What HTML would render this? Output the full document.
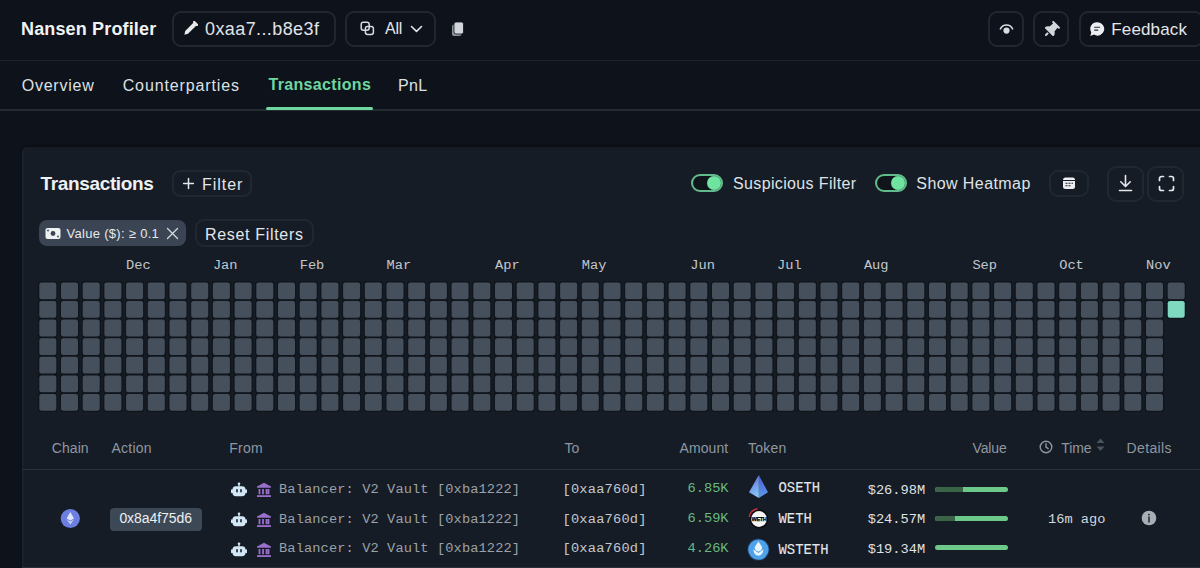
<!DOCTYPE html>
<html><head><meta charset="utf-8">
<style>
*{box-sizing:border-box;margin:0;padding:0}
html,body{width:1200px;height:568px;overflow:hidden;background:#0e121a;font-family:"Liberation Sans",sans-serif}
.a{position:absolute;white-space:nowrap}
</style></head><body>
<div class="a" style="left:21px;top:20px;font-size:18px;line-height:1;color:#f1f2f4;font-weight:bold;letter-spacing:0.15px;font-family:'Liberation Sans',sans-serif;">Nansen Profiler</div>
<div class="a" style="left:172px;top:11px;width:164px;height:36px;background:#0e121a;border:2px solid #22272f;border-radius:9px;"></div>
<svg class="a" style="left:183px;top:21px" width="15" height="15" viewBox="0 0 15 15"><path d="M10.6 1.6 L13.4 4.4 L5 12.8 L1.4 13.8 L2.2 10 Z" fill="#e8eaee"/><path d="M11.2 1 L14 3.8" stroke="#e8eaee" stroke-width="2.4" stroke-linecap="round"/></svg>
<div class="a" style="left:205px;top:20px;font-size:18px;line-height:1;color:#e0e3e7;font-weight:normal;letter-spacing:0.4px;font-family:'Liberation Sans',sans-serif;">0xaa7...b8e3f</div>
<div class="a" style="left:345px;top:11px;width:91px;height:36px;background:#0e121a;border:2px solid #22272f;border-radius:9px;"></div>
<svg class="a" style="left:360px;top:21px" width="15" height="15" viewBox="0 0 15 15"><rect x="1.2" y="1.2" width="8" height="8" rx="2.2" fill="none" stroke="#d8dbe0" stroke-width="1.5"/><rect x="5.4" y="5.4" width="8" height="8" rx="2.2" fill="none" stroke="#d8dbe0" stroke-width="1.5"/></svg>
<div class="a" style="left:385px;top:21.3px;font-size:16px;line-height:1;color:#e3e6ea;font-weight:normal;letter-spacing:-0.2px;font-family:'Liberation Sans',sans-serif;">All</div>
<svg class="a" style="left:410px;top:25px" width="13" height="8" viewBox="0 0 13 8"><path d="M1.5 1.5 L6.5 6.3 L11.5 1.5" fill="none" stroke="#e3e6ea" stroke-width="1.6" stroke-linecap="round" stroke-linejoin="round"/></svg>
<svg class="a" style="left:451px;top:21px" width="14" height="16" viewBox="0 0 14 16"><rect x="1" y="3.5" width="9.5" height="11.5" rx="2" fill="#8d939b"/><rect x="3" y="1" width="9.5" height="12" rx="2" fill="#d2d6dc" stroke="#0e121a" stroke-width="0.8"/></svg>
<div class="a" style="left:988px;top:11px;width:36px;height:36px;background:#0e121a;border:2px solid #22272f;border-radius:9px;"></div>
<svg class="a" style="left:998px;top:22px" width="17" height="13" viewBox="0 0 17 13"><path d="M2.4 6.8 A6.8 6.8 0 0 1 14.6 6.8" fill="none" stroke="#d8dbe0" stroke-width="1.6" stroke-linecap="round"/><circle cx="8.5" cy="8.6" r="3.1" fill="#d8dbe0"/></svg>
<div class="a" style="left:1033px;top:11px;width:36px;height:36px;background:#0e121a;border:2px solid #22272f;border-radius:9px;"></div>
<svg class="a" style="left:1040.5px;top:20.3px" width="20" height="20" viewBox="0 0 20 20"><g transform="rotate(45 10 10) translate(3.85 1.8) scale(0.032)"><path d="M32 32C32 14.3 46.3 0 64 0H320c17.7 0 32 14.3 32 32s-14.3 32-32 32H290.5l11.4 148.2c36.7 19.9 65.7 53.2 79.5 94.7l1 3c3.3 9.8 1.6 20.5-4.4 28.8s-15.7 13.3-26 13.3H32c-10.3 0-19.9-4.9-26-13.3s-7.7-19.1-4.4-28.8l1-3c13.8-41.5 42.8-74.8 79.5-94.7L93.5 64H64C46.3 64 32 49.7 32 32zM160 384h64v96c0 17.7-14.3 32-32 32s-32-14.3-32-32V384z" fill="#d3d7dc"/></g></svg>
<div class="a" style="left:1079px;top:11px;width:125px;height:36px;background:#0e121a;border:2px solid #22272f;border-radius:9px;"></div>
<svg class="a" style="left:1089px;top:21px" width="16" height="16" viewBox="0 0 16 16"><path d="M8.6 1.2 A6.7 6.7 0 1 1 5 13.6 L1.3 14.9 L2.3 11.4 A6.7 6.7 0 0 1 8.6 1.2 Z" fill="#eceef1"/><path d="M5.6 6.3 H10.6 M5.6 9.1 H8.8" stroke="#2a2f37" stroke-width="1.1" stroke-linecap="round"/></svg>
<div class="a" style="left:1111.3px;top:21.2px;font-size:17px;line-height:1;color:#e3e6ea;font-weight:normal;letter-spacing:0.14px;font-family:'Liberation Sans',sans-serif;">Feedback</div>
<div class="a" style="left:0px;top:60px;width:1200px;height:1px;background:#1e232a;border-radius:0px;"></div>
<div class="a" style="left:21.7px;top:77.6px;font-size:16px;line-height:1;color:#dde0e5;font-weight:normal;letter-spacing:0.77px;font-family:'Liberation Sans',sans-serif;">Overview</div>
<div class="a" style="left:122.7px;top:77.6px;font-size:16px;line-height:1;color:#dde0e5;font-weight:normal;letter-spacing:0.88px;font-family:'Liberation Sans',sans-serif;">Counterparties</div>
<div class="a" style="left:268.5px;top:77.4px;font-size:16px;line-height:1;color:#70d6a0;font-weight:bold;letter-spacing:0.33px;font-family:'Liberation Sans',sans-serif;">Transactions</div>
<div class="a" style="left:398px;top:77.6px;font-size:16px;line-height:1;color:#dde0e5;font-weight:normal;letter-spacing:0.3px;font-family:'Liberation Sans',sans-serif;">PnL</div>
<div class="a" style="left:0px;top:109px;width:1200px;height:2px;background:#262b33;border-radius:0px;"></div>
<div class="a" style="left:266px;top:107px;width:107px;height:3px;background:#70d6a0;border-radius:2px;"></div>
<div class="a" style="left:22px;top:147px;width:1200px;height:460px;background:#161c25;border-radius:6px;box-shadow:inset 1.5px 0 0 #1d232b, 0 -2px 3px rgba(0,0,0,0.22)"></div>
<div class="a" style="left:40.5px;top:173.9px;font-size:19px;line-height:1;color:#eef0f2;font-weight:bold;letter-spacing:-0.35px;font-family:'Liberation Sans',sans-serif;">Transactions</div>
<div class="a" style="left:172px;top:170px;width:80px;height:27px;background:#161c25;border:2px solid #22272f;border-radius:8px;"></div>
<svg class="a" style="left:182px;top:177.2px" width="13" height="13" viewBox="0 0 13 13"><path d="M6.5 1.6 V11.4 M1.6 6.5 H11.4" stroke="#e3e6ea" stroke-width="1.5" stroke-linecap="round"/></svg>
<div class="a" style="left:202px;top:177px;font-size:16px;line-height:1;color:#e3e6ea;font-weight:normal;letter-spacing:0.95px;font-family:'Liberation Sans',sans-serif;">Filter</div>
<div class="a" style="left:691px;top:174px;width:32px;height:18px;background:#10151c;border:2px solid #62bb8b;border-radius:9px;"></div>
<div class="a" style="left:707px;top:176px;width:14px;height:14px;border-radius:7px;background:#6fe3a0"></div>
<div class="a" style="left:733px;top:176.4px;font-size:16px;line-height:1;color:#dfe2e6;font-weight:normal;letter-spacing:0.36px;font-family:'Liberation Sans',sans-serif;">Suspicious Filter</div>
<div class="a" style="left:875px;top:174px;width:32px;height:18px;background:#10151c;border:2px solid #62bb8b;border-radius:9px;"></div>
<div class="a" style="left:891px;top:176px;width:14px;height:14px;border-radius:7px;background:#6fe3a0"></div>
<div class="a" style="left:916.3px;top:176.4px;font-size:16px;line-height:1;color:#dfe2e6;font-weight:normal;letter-spacing:0.42px;font-family:'Liberation Sans',sans-serif;">Show Heatmap</div>
<div class="a" style="left:1049px;top:170px;width:40px;height:27px;background:#161c25;border:2px solid #22272f;border-radius:9px;"></div>
<svg class="a" style="left:1062px;top:177px" width="14" height="13" viewBox="0 0 14 13"><rect x="1" y="0.5" width="12" height="11.5" rx="2.5" fill="#eceef1"/><path d="M1 3.5 H13" stroke="#161c25" stroke-width="1"/><path d="M3.5 6.2 H5.5 M6.5 6.2 H8.5 M9.5 6.2 H11 M3.5 8.8 H5.5 M6.5 8.8 H8.5" stroke="#161c25" stroke-width="1.1"/></svg>
<div class="a" style="left:1107px;top:166px;width:37px;height:36px;background:#161c25;border:2px solid #22272f;border-radius:9px;"></div>
<svg class="a" style="left:1118px;top:174px" width="15" height="18" viewBox="0 0 15 18"><path d="M7.5 1.5 V12 M2.8 7.8 L7.5 12.5 L12.2 7.8" fill="none" stroke="#e6e8ec" stroke-width="1.6" stroke-linecap="round" stroke-linejoin="round"/><path d="M1.5 16.5 H13.5" stroke="#e6e8ec" stroke-width="1.6" stroke-linecap="round"/></svg>
<div class="a" style="left:1147px;top:166px;width:37px;height:36px;background:#161c25;border:2px solid #22272f;border-radius:9px;"></div>
<svg class="a" style="left:1158px;top:175px" width="17" height="17" viewBox="0 0 17 17"><path d="M1.5 5.5 V3.5 A2 2 0 0 1 3.5 1.5 H5.5 M11.5 1.5 H13.5 A2 2 0 0 1 15.5 3.5 V5.5 M15.5 11.5 V13.5 A2 2 0 0 1 13.5 15.5 H11.5 M5.5 15.5 H3.5 A2 2 0 0 1 1.5 13.5 V11.5" fill="none" stroke="#e6e8ec" stroke-width="1.7" stroke-linecap="round"/></svg>
<div class="a" style="left:39px;top:220px;width:147px;height:26px;background:#3a4452;border-radius:8px;"></div>
<svg class="a" style="left:45px;top:227px" width="16" height="13" viewBox="0 0 16 13"><rect x="0.5" y="1" width="15" height="11" rx="2" fill="#eef0f2"/><circle cx="8" cy="6.5" r="2.4" fill="#3a4452"/><circle cx="3" cy="3.5" r="0.9" fill="#3a4452"/><circle cx="13" cy="9.5" r="0.9" fill="#3a4452"/></svg>
<div class="a" style="left:66.5px;top:226.8px;font-size:13px;line-height:1;color:#e6e8ec;font-weight:normal;letter-spacing:0.3px;font-family:'Liberation Sans',sans-serif;">Value ($): &#8805; 0.1</div>
<svg class="a" style="left:166px;top:227px" width="13" height="13" viewBox="0 0 13 13"><path d="M1.5 1.5 L11.5 11.5 M11.5 1.5 L1.5 11.5" stroke="#d5d9de" stroke-width="1.3" stroke-linecap="round"/></svg>
<div class="a" style="left:195px;top:219px;width:119px;height:28px;background:#161c25;border:2px solid #22272f;border-radius:9px;"></div>
<div class="a" style="left:205px;top:226.7px;font-size:16px;line-height:1;color:#e3e6ea;font-weight:normal;letter-spacing:0.68px;font-family:'Liberation Sans',sans-serif;">Reset Filters</div>
<div class="a" style="left:126.1px;top:258.6px;font-size:13.7px;line-height:1;color:#c2c7cd;font-weight:normal;letter-spacing:0px;font-family:'Liberation Mono',monospace;">Dec</div>
<div class="a" style="left:212.9px;top:258.6px;font-size:13.7px;line-height:1;color:#c2c7cd;font-weight:normal;letter-spacing:0px;font-family:'Liberation Mono',monospace;">Jan</div>
<div class="a" style="left:299.7px;top:258.6px;font-size:13.7px;line-height:1;color:#c2c7cd;font-weight:normal;letter-spacing:0px;font-family:'Liberation Mono',monospace;">Feb</div>
<div class="a" style="left:386.5px;top:258.6px;font-size:13.7px;line-height:1;color:#c2c7cd;font-weight:normal;letter-spacing:0px;font-family:'Liberation Mono',monospace;">Mar</div>
<div class="a" style="left:495.0px;top:258.6px;font-size:13.7px;line-height:1;color:#c2c7cd;font-weight:normal;letter-spacing:0px;font-family:'Liberation Mono',monospace;">Apr</div>
<div class="a" style="left:581.8px;top:258.6px;font-size:13.7px;line-height:1;color:#c2c7cd;font-weight:normal;letter-spacing:0px;font-family:'Liberation Mono',monospace;">May</div>
<div class="a" style="left:690.3px;top:258.6px;font-size:13.7px;line-height:1;color:#c2c7cd;font-weight:normal;letter-spacing:0px;font-family:'Liberation Mono',monospace;">Jun</div>
<div class="a" style="left:777.1px;top:258.6px;font-size:13.7px;line-height:1;color:#c2c7cd;font-weight:normal;letter-spacing:0px;font-family:'Liberation Mono',monospace;">Jul</div>
<div class="a" style="left:863.9px;top:258.6px;font-size:13.7px;line-height:1;color:#c2c7cd;font-weight:normal;letter-spacing:0px;font-family:'Liberation Mono',monospace;">Aug</div>
<div class="a" style="left:972.4px;top:258.6px;font-size:13.7px;line-height:1;color:#c2c7cd;font-weight:normal;letter-spacing:0px;font-family:'Liberation Mono',monospace;">Sep</div>
<div class="a" style="left:1059.2px;top:258.6px;font-size:13.7px;line-height:1;color:#c2c7cd;font-weight:normal;letter-spacing:0px;font-family:'Liberation Mono',monospace;">Oct</div>
<div class="a" style="left:1146.0px;top:258.6px;font-size:13.7px;line-height:1;color:#c2c7cd;font-weight:normal;letter-spacing:0px;font-family:'Liberation Mono',monospace;">Nov</div>
<svg class="a" style="left:0;top:0" width="1200" height="568"><rect x="39.30" y="282.40" width="17" height="16.8" rx="2.2" fill="#46505c" stroke="#10151c" stroke-width="2.6" paint-order="stroke"/><rect x="39.30" y="301.00" width="17" height="16.8" rx="2.2" fill="#46505c" stroke="#10151c" stroke-width="2.6" paint-order="stroke"/><rect x="39.30" y="319.60" width="17" height="16.8" rx="2.2" fill="#46505c" stroke="#10151c" stroke-width="2.6" paint-order="stroke"/><rect x="39.30" y="338.20" width="17" height="16.8" rx="2.2" fill="#46505c" stroke="#10151c" stroke-width="2.6" paint-order="stroke"/><rect x="39.30" y="356.80" width="17" height="16.8" rx="2.2" fill="#46505c" stroke="#10151c" stroke-width="2.6" paint-order="stroke"/><rect x="39.30" y="375.40" width="17" height="16.8" rx="2.2" fill="#46505c" stroke="#10151c" stroke-width="2.6" paint-order="stroke"/><rect x="39.30" y="394.00" width="17" height="16.8" rx="2.2" fill="#46505c" stroke="#10151c" stroke-width="2.6" paint-order="stroke"/><rect x="61.00" y="282.40" width="17" height="16.8" rx="2.2" fill="#46505c" stroke="#10151c" stroke-width="2.6" paint-order="stroke"/><rect x="61.00" y="301.00" width="17" height="16.8" rx="2.2" fill="#46505c" stroke="#10151c" stroke-width="2.6" paint-order="stroke"/><rect x="61.00" y="319.60" width="17" height="16.8" rx="2.2" fill="#46505c" stroke="#10151c" stroke-width="2.6" paint-order="stroke"/><rect x="61.00" y="338.20" width="17" height="16.8" rx="2.2" fill="#46505c" stroke="#10151c" stroke-width="2.6" paint-order="stroke"/><rect x="61.00" y="356.80" width="17" height="16.8" rx="2.2" fill="#46505c" stroke="#10151c" stroke-width="2.6" paint-order="stroke"/><rect x="61.00" y="375.40" width="17" height="16.8" rx="2.2" fill="#46505c" stroke="#10151c" stroke-width="2.6" paint-order="stroke"/><rect x="61.00" y="394.00" width="17" height="16.8" rx="2.2" fill="#46505c" stroke="#10151c" stroke-width="2.6" paint-order="stroke"/><rect x="82.70" y="282.40" width="17" height="16.8" rx="2.2" fill="#46505c" stroke="#10151c" stroke-width="2.6" paint-order="stroke"/><rect x="82.70" y="301.00" width="17" height="16.8" rx="2.2" fill="#46505c" stroke="#10151c" stroke-width="2.6" paint-order="stroke"/><rect x="82.70" y="319.60" width="17" height="16.8" rx="2.2" fill="#46505c" stroke="#10151c" stroke-width="2.6" paint-order="stroke"/><rect x="82.70" y="338.20" width="17" height="16.8" rx="2.2" fill="#46505c" stroke="#10151c" stroke-width="2.6" paint-order="stroke"/><rect x="82.70" y="356.80" width="17" height="16.8" rx="2.2" fill="#46505c" stroke="#10151c" stroke-width="2.6" paint-order="stroke"/><rect x="82.70" y="375.40" width="17" height="16.8" rx="2.2" fill="#46505c" stroke="#10151c" stroke-width="2.6" paint-order="stroke"/><rect x="82.70" y="394.00" width="17" height="16.8" rx="2.2" fill="#46505c" stroke="#10151c" stroke-width="2.6" paint-order="stroke"/><rect x="104.40" y="282.40" width="17" height="16.8" rx="2.2" fill="#46505c" stroke="#10151c" stroke-width="2.6" paint-order="stroke"/><rect x="104.40" y="301.00" width="17" height="16.8" rx="2.2" fill="#46505c" stroke="#10151c" stroke-width="2.6" paint-order="stroke"/><rect x="104.40" y="319.60" width="17" height="16.8" rx="2.2" fill="#46505c" stroke="#10151c" stroke-width="2.6" paint-order="stroke"/><rect x="104.40" y="338.20" width="17" height="16.8" rx="2.2" fill="#46505c" stroke="#10151c" stroke-width="2.6" paint-order="stroke"/><rect x="104.40" y="356.80" width="17" height="16.8" rx="2.2" fill="#46505c" stroke="#10151c" stroke-width="2.6" paint-order="stroke"/><rect x="104.40" y="375.40" width="17" height="16.8" rx="2.2" fill="#46505c" stroke="#10151c" stroke-width="2.6" paint-order="stroke"/><rect x="104.40" y="394.00" width="17" height="16.8" rx="2.2" fill="#46505c" stroke="#10151c" stroke-width="2.6" paint-order="stroke"/><rect x="126.10" y="282.40" width="17" height="16.8" rx="2.2" fill="#46505c" stroke="#10151c" stroke-width="2.6" paint-order="stroke"/><rect x="126.10" y="301.00" width="17" height="16.8" rx="2.2" fill="#46505c" stroke="#10151c" stroke-width="2.6" paint-order="stroke"/><rect x="126.10" y="319.60" width="17" height="16.8" rx="2.2" fill="#46505c" stroke="#10151c" stroke-width="2.6" paint-order="stroke"/><rect x="126.10" y="338.20" width="17" height="16.8" rx="2.2" fill="#46505c" stroke="#10151c" stroke-width="2.6" paint-order="stroke"/><rect x="126.10" y="356.80" width="17" height="16.8" rx="2.2" fill="#46505c" stroke="#10151c" stroke-width="2.6" paint-order="stroke"/><rect x="126.10" y="375.40" width="17" height="16.8" rx="2.2" fill="#46505c" stroke="#10151c" stroke-width="2.6" paint-order="stroke"/><rect x="126.10" y="394.00" width="17" height="16.8" rx="2.2" fill="#46505c" stroke="#10151c" stroke-width="2.6" paint-order="stroke"/><rect x="147.80" y="282.40" width="17" height="16.8" rx="2.2" fill="#46505c" stroke="#10151c" stroke-width="2.6" paint-order="stroke"/><rect x="147.80" y="301.00" width="17" height="16.8" rx="2.2" fill="#46505c" stroke="#10151c" stroke-width="2.6" paint-order="stroke"/><rect x="147.80" y="319.60" width="17" height="16.8" rx="2.2" fill="#46505c" stroke="#10151c" stroke-width="2.6" paint-order="stroke"/><rect x="147.80" y="338.20" width="17" height="16.8" rx="2.2" fill="#46505c" stroke="#10151c" stroke-width="2.6" paint-order="stroke"/><rect x="147.80" y="356.80" width="17" height="16.8" rx="2.2" fill="#46505c" stroke="#10151c" stroke-width="2.6" paint-order="stroke"/><rect x="147.80" y="375.40" width="17" height="16.8" rx="2.2" fill="#46505c" stroke="#10151c" stroke-width="2.6" paint-order="stroke"/><rect x="147.80" y="394.00" width="17" height="16.8" rx="2.2" fill="#46505c" stroke="#10151c" stroke-width="2.6" paint-order="stroke"/><rect x="169.50" y="282.40" width="17" height="16.8" rx="2.2" fill="#46505c" stroke="#10151c" stroke-width="2.6" paint-order="stroke"/><rect x="169.50" y="301.00" width="17" height="16.8" rx="2.2" fill="#46505c" stroke="#10151c" stroke-width="2.6" paint-order="stroke"/><rect x="169.50" y="319.60" width="17" height="16.8" rx="2.2" fill="#46505c" stroke="#10151c" stroke-width="2.6" paint-order="stroke"/><rect x="169.50" y="338.20" width="17" height="16.8" rx="2.2" fill="#46505c" stroke="#10151c" stroke-width="2.6" paint-order="stroke"/><rect x="169.50" y="356.80" width="17" height="16.8" rx="2.2" fill="#46505c" stroke="#10151c" stroke-width="2.6" paint-order="stroke"/><rect x="169.50" y="375.40" width="17" height="16.8" rx="2.2" fill="#46505c" stroke="#10151c" stroke-width="2.6" paint-order="stroke"/><rect x="169.50" y="394.00" width="17" height="16.8" rx="2.2" fill="#46505c" stroke="#10151c" stroke-width="2.6" paint-order="stroke"/><rect x="191.20" y="282.40" width="17" height="16.8" rx="2.2" fill="#46505c" stroke="#10151c" stroke-width="2.6" paint-order="stroke"/><rect x="191.20" y="301.00" width="17" height="16.8" rx="2.2" fill="#46505c" stroke="#10151c" stroke-width="2.6" paint-order="stroke"/><rect x="191.20" y="319.60" width="17" height="16.8" rx="2.2" fill="#46505c" stroke="#10151c" stroke-width="2.6" paint-order="stroke"/><rect x="191.20" y="338.20" width="17" height="16.8" rx="2.2" fill="#46505c" stroke="#10151c" stroke-width="2.6" paint-order="stroke"/><rect x="191.20" y="356.80" width="17" height="16.8" rx="2.2" fill="#46505c" stroke="#10151c" stroke-width="2.6" paint-order="stroke"/><rect x="191.20" y="375.40" width="17" height="16.8" rx="2.2" fill="#46505c" stroke="#10151c" stroke-width="2.6" paint-order="stroke"/><rect x="191.20" y="394.00" width="17" height="16.8" rx="2.2" fill="#46505c" stroke="#10151c" stroke-width="2.6" paint-order="stroke"/><rect x="212.90" y="282.40" width="17" height="16.8" rx="2.2" fill="#46505c" stroke="#10151c" stroke-width="2.6" paint-order="stroke"/><rect x="212.90" y="301.00" width="17" height="16.8" rx="2.2" fill="#46505c" stroke="#10151c" stroke-width="2.6" paint-order="stroke"/><rect x="212.90" y="319.60" width="17" height="16.8" rx="2.2" fill="#46505c" stroke="#10151c" stroke-width="2.6" paint-order="stroke"/><rect x="212.90" y="338.20" width="17" height="16.8" rx="2.2" fill="#46505c" stroke="#10151c" stroke-width="2.6" paint-order="stroke"/><rect x="212.90" y="356.80" width="17" height="16.8" rx="2.2" fill="#46505c" stroke="#10151c" stroke-width="2.6" paint-order="stroke"/><rect x="212.90" y="375.40" width="17" height="16.8" rx="2.2" fill="#46505c" stroke="#10151c" stroke-width="2.6" paint-order="stroke"/><rect x="212.90" y="394.00" width="17" height="16.8" rx="2.2" fill="#46505c" stroke="#10151c" stroke-width="2.6" paint-order="stroke"/><rect x="234.60" y="282.40" width="17" height="16.8" rx="2.2" fill="#46505c" stroke="#10151c" stroke-width="2.6" paint-order="stroke"/><rect x="234.60" y="301.00" width="17" height="16.8" rx="2.2" fill="#46505c" stroke="#10151c" stroke-width="2.6" paint-order="stroke"/><rect x="234.60" y="319.60" width="17" height="16.8" rx="2.2" fill="#46505c" stroke="#10151c" stroke-width="2.6" paint-order="stroke"/><rect x="234.60" y="338.20" width="17" height="16.8" rx="2.2" fill="#46505c" stroke="#10151c" stroke-width="2.6" paint-order="stroke"/><rect x="234.60" y="356.80" width="17" height="16.8" rx="2.2" fill="#46505c" stroke="#10151c" stroke-width="2.6" paint-order="stroke"/><rect x="234.60" y="375.40" width="17" height="16.8" rx="2.2" fill="#46505c" stroke="#10151c" stroke-width="2.6" paint-order="stroke"/><rect x="234.60" y="394.00" width="17" height="16.8" rx="2.2" fill="#46505c" stroke="#10151c" stroke-width="2.6" paint-order="stroke"/><rect x="256.30" y="282.40" width="17" height="16.8" rx="2.2" fill="#46505c" stroke="#10151c" stroke-width="2.6" paint-order="stroke"/><rect x="256.30" y="301.00" width="17" height="16.8" rx="2.2" fill="#46505c" stroke="#10151c" stroke-width="2.6" paint-order="stroke"/><rect x="256.30" y="319.60" width="17" height="16.8" rx="2.2" fill="#46505c" stroke="#10151c" stroke-width="2.6" paint-order="stroke"/><rect x="256.30" y="338.20" width="17" height="16.8" rx="2.2" fill="#46505c" stroke="#10151c" stroke-width="2.6" paint-order="stroke"/><rect x="256.30" y="356.80" width="17" height="16.8" rx="2.2" fill="#46505c" stroke="#10151c" stroke-width="2.6" paint-order="stroke"/><rect x="256.30" y="375.40" width="17" height="16.8" rx="2.2" fill="#46505c" stroke="#10151c" stroke-width="2.6" paint-order="stroke"/><rect x="256.30" y="394.00" width="17" height="16.8" rx="2.2" fill="#46505c" stroke="#10151c" stroke-width="2.6" paint-order="stroke"/><rect x="278.00" y="282.40" width="17" height="16.8" rx="2.2" fill="#46505c" stroke="#10151c" stroke-width="2.6" paint-order="stroke"/><rect x="278.00" y="301.00" width="17" height="16.8" rx="2.2" fill="#46505c" stroke="#10151c" stroke-width="2.6" paint-order="stroke"/><rect x="278.00" y="319.60" width="17" height="16.8" rx="2.2" fill="#46505c" stroke="#10151c" stroke-width="2.6" paint-order="stroke"/><rect x="278.00" y="338.20" width="17" height="16.8" rx="2.2" fill="#46505c" stroke="#10151c" stroke-width="2.6" paint-order="stroke"/><rect x="278.00" y="356.80" width="17" height="16.8" rx="2.2" fill="#46505c" stroke="#10151c" stroke-width="2.6" paint-order="stroke"/><rect x="278.00" y="375.40" width="17" height="16.8" rx="2.2" fill="#46505c" stroke="#10151c" stroke-width="2.6" paint-order="stroke"/><rect x="278.00" y="394.00" width="17" height="16.8" rx="2.2" fill="#46505c" stroke="#10151c" stroke-width="2.6" paint-order="stroke"/><rect x="299.70" y="282.40" width="17" height="16.8" rx="2.2" fill="#46505c" stroke="#10151c" stroke-width="2.6" paint-order="stroke"/><rect x="299.70" y="301.00" width="17" height="16.8" rx="2.2" fill="#46505c" stroke="#10151c" stroke-width="2.6" paint-order="stroke"/><rect x="299.70" y="319.60" width="17" height="16.8" rx="2.2" fill="#46505c" stroke="#10151c" stroke-width="2.6" paint-order="stroke"/><rect x="299.70" y="338.20" width="17" height="16.8" rx="2.2" fill="#46505c" stroke="#10151c" stroke-width="2.6" paint-order="stroke"/><rect x="299.70" y="356.80" width="17" height="16.8" rx="2.2" fill="#46505c" stroke="#10151c" stroke-width="2.6" paint-order="stroke"/><rect x="299.70" y="375.40" width="17" height="16.8" rx="2.2" fill="#46505c" stroke="#10151c" stroke-width="2.6" paint-order="stroke"/><rect x="299.70" y="394.00" width="17" height="16.8" rx="2.2" fill="#46505c" stroke="#10151c" stroke-width="2.6" paint-order="stroke"/><rect x="321.40" y="282.40" width="17" height="16.8" rx="2.2" fill="#46505c" stroke="#10151c" stroke-width="2.6" paint-order="stroke"/><rect x="321.40" y="301.00" width="17" height="16.8" rx="2.2" fill="#46505c" stroke="#10151c" stroke-width="2.6" paint-order="stroke"/><rect x="321.40" y="319.60" width="17" height="16.8" rx="2.2" fill="#46505c" stroke="#10151c" stroke-width="2.6" paint-order="stroke"/><rect x="321.40" y="338.20" width="17" height="16.8" rx="2.2" fill="#46505c" stroke="#10151c" stroke-width="2.6" paint-order="stroke"/><rect x="321.40" y="356.80" width="17" height="16.8" rx="2.2" fill="#46505c" stroke="#10151c" stroke-width="2.6" paint-order="stroke"/><rect x="321.40" y="375.40" width="17" height="16.8" rx="2.2" fill="#46505c" stroke="#10151c" stroke-width="2.6" paint-order="stroke"/><rect x="321.40" y="394.00" width="17" height="16.8" rx="2.2" fill="#46505c" stroke="#10151c" stroke-width="2.6" paint-order="stroke"/><rect x="343.10" y="282.40" width="17" height="16.8" rx="2.2" fill="#46505c" stroke="#10151c" stroke-width="2.6" paint-order="stroke"/><rect x="343.10" y="301.00" width="17" height="16.8" rx="2.2" fill="#46505c" stroke="#10151c" stroke-width="2.6" paint-order="stroke"/><rect x="343.10" y="319.60" width="17" height="16.8" rx="2.2" fill="#46505c" stroke="#10151c" stroke-width="2.6" paint-order="stroke"/><rect x="343.10" y="338.20" width="17" height="16.8" rx="2.2" fill="#46505c" stroke="#10151c" stroke-width="2.6" paint-order="stroke"/><rect x="343.10" y="356.80" width="17" height="16.8" rx="2.2" fill="#46505c" stroke="#10151c" stroke-width="2.6" paint-order="stroke"/><rect x="343.10" y="375.40" width="17" height="16.8" rx="2.2" fill="#46505c" stroke="#10151c" stroke-width="2.6" paint-order="stroke"/><rect x="343.10" y="394.00" width="17" height="16.8" rx="2.2" fill="#46505c" stroke="#10151c" stroke-width="2.6" paint-order="stroke"/><rect x="364.80" y="282.40" width="17" height="16.8" rx="2.2" fill="#46505c" stroke="#10151c" stroke-width="2.6" paint-order="stroke"/><rect x="364.80" y="301.00" width="17" height="16.8" rx="2.2" fill="#46505c" stroke="#10151c" stroke-width="2.6" paint-order="stroke"/><rect x="364.80" y="319.60" width="17" height="16.8" rx="2.2" fill="#46505c" stroke="#10151c" stroke-width="2.6" paint-order="stroke"/><rect x="364.80" y="338.20" width="17" height="16.8" rx="2.2" fill="#46505c" stroke="#10151c" stroke-width="2.6" paint-order="stroke"/><rect x="364.80" y="356.80" width="17" height="16.8" rx="2.2" fill="#46505c" stroke="#10151c" stroke-width="2.6" paint-order="stroke"/><rect x="364.80" y="375.40" width="17" height="16.8" rx="2.2" fill="#46505c" stroke="#10151c" stroke-width="2.6" paint-order="stroke"/><rect x="364.80" y="394.00" width="17" height="16.8" rx="2.2" fill="#46505c" stroke="#10151c" stroke-width="2.6" paint-order="stroke"/><rect x="386.50" y="282.40" width="17" height="16.8" rx="2.2" fill="#46505c" stroke="#10151c" stroke-width="2.6" paint-order="stroke"/><rect x="386.50" y="301.00" width="17" height="16.8" rx="2.2" fill="#46505c" stroke="#10151c" stroke-width="2.6" paint-order="stroke"/><rect x="386.50" y="319.60" width="17" height="16.8" rx="2.2" fill="#46505c" stroke="#10151c" stroke-width="2.6" paint-order="stroke"/><rect x="386.50" y="338.20" width="17" height="16.8" rx="2.2" fill="#46505c" stroke="#10151c" stroke-width="2.6" paint-order="stroke"/><rect x="386.50" y="356.80" width="17" height="16.8" rx="2.2" fill="#46505c" stroke="#10151c" stroke-width="2.6" paint-order="stroke"/><rect x="386.50" y="375.40" width="17" height="16.8" rx="2.2" fill="#46505c" stroke="#10151c" stroke-width="2.6" paint-order="stroke"/><rect x="386.50" y="394.00" width="17" height="16.8" rx="2.2" fill="#46505c" stroke="#10151c" stroke-width="2.6" paint-order="stroke"/><rect x="408.20" y="282.40" width="17" height="16.8" rx="2.2" fill="#46505c" stroke="#10151c" stroke-width="2.6" paint-order="stroke"/><rect x="408.20" y="301.00" width="17" height="16.8" rx="2.2" fill="#46505c" stroke="#10151c" stroke-width="2.6" paint-order="stroke"/><rect x="408.20" y="319.60" width="17" height="16.8" rx="2.2" fill="#46505c" stroke="#10151c" stroke-width="2.6" paint-order="stroke"/><rect x="408.20" y="338.20" width="17" height="16.8" rx="2.2" fill="#46505c" stroke="#10151c" stroke-width="2.6" paint-order="stroke"/><rect x="408.20" y="356.80" width="17" height="16.8" rx="2.2" fill="#46505c" stroke="#10151c" stroke-width="2.6" paint-order="stroke"/><rect x="408.20" y="375.40" width="17" height="16.8" rx="2.2" fill="#46505c" stroke="#10151c" stroke-width="2.6" paint-order="stroke"/><rect x="408.20" y="394.00" width="17" height="16.8" rx="2.2" fill="#46505c" stroke="#10151c" stroke-width="2.6" paint-order="stroke"/><rect x="429.90" y="282.40" width="17" height="16.8" rx="2.2" fill="#46505c" stroke="#10151c" stroke-width="2.6" paint-order="stroke"/><rect x="429.90" y="301.00" width="17" height="16.8" rx="2.2" fill="#46505c" stroke="#10151c" stroke-width="2.6" paint-order="stroke"/><rect x="429.90" y="319.60" width="17" height="16.8" rx="2.2" fill="#46505c" stroke="#10151c" stroke-width="2.6" paint-order="stroke"/><rect x="429.90" y="338.20" width="17" height="16.8" rx="2.2" fill="#46505c" stroke="#10151c" stroke-width="2.6" paint-order="stroke"/><rect x="429.90" y="356.80" width="17" height="16.8" rx="2.2" fill="#46505c" stroke="#10151c" stroke-width="2.6" paint-order="stroke"/><rect x="429.90" y="375.40" width="17" height="16.8" rx="2.2" fill="#46505c" stroke="#10151c" stroke-width="2.6" paint-order="stroke"/><rect x="429.90" y="394.00" width="17" height="16.8" rx="2.2" fill="#46505c" stroke="#10151c" stroke-width="2.6" paint-order="stroke"/><rect x="451.60" y="282.40" width="17" height="16.8" rx="2.2" fill="#46505c" stroke="#10151c" stroke-width="2.6" paint-order="stroke"/><rect x="451.60" y="301.00" width="17" height="16.8" rx="2.2" fill="#46505c" stroke="#10151c" stroke-width="2.6" paint-order="stroke"/><rect x="451.60" y="319.60" width="17" height="16.8" rx="2.2" fill="#46505c" stroke="#10151c" stroke-width="2.6" paint-order="stroke"/><rect x="451.60" y="338.20" width="17" height="16.8" rx="2.2" fill="#46505c" stroke="#10151c" stroke-width="2.6" paint-order="stroke"/><rect x="451.60" y="356.80" width="17" height="16.8" rx="2.2" fill="#46505c" stroke="#10151c" stroke-width="2.6" paint-order="stroke"/><rect x="451.60" y="375.40" width="17" height="16.8" rx="2.2" fill="#46505c" stroke="#10151c" stroke-width="2.6" paint-order="stroke"/><rect x="451.60" y="394.00" width="17" height="16.8" rx="2.2" fill="#46505c" stroke="#10151c" stroke-width="2.6" paint-order="stroke"/><rect x="473.30" y="282.40" width="17" height="16.8" rx="2.2" fill="#46505c" stroke="#10151c" stroke-width="2.6" paint-order="stroke"/><rect x="473.30" y="301.00" width="17" height="16.8" rx="2.2" fill="#46505c" stroke="#10151c" stroke-width="2.6" paint-order="stroke"/><rect x="473.30" y="319.60" width="17" height="16.8" rx="2.2" fill="#46505c" stroke="#10151c" stroke-width="2.6" paint-order="stroke"/><rect x="473.30" y="338.20" width="17" height="16.8" rx="2.2" fill="#46505c" stroke="#10151c" stroke-width="2.6" paint-order="stroke"/><rect x="473.30" y="356.80" width="17" height="16.8" rx="2.2" fill="#46505c" stroke="#10151c" stroke-width="2.6" paint-order="stroke"/><rect x="473.30" y="375.40" width="17" height="16.8" rx="2.2" fill="#46505c" stroke="#10151c" stroke-width="2.6" paint-order="stroke"/><rect x="473.30" y="394.00" width="17" height="16.8" rx="2.2" fill="#46505c" stroke="#10151c" stroke-width="2.6" paint-order="stroke"/><rect x="495.00" y="282.40" width="17" height="16.8" rx="2.2" fill="#46505c" stroke="#10151c" stroke-width="2.6" paint-order="stroke"/><rect x="495.00" y="301.00" width="17" height="16.8" rx="2.2" fill="#46505c" stroke="#10151c" stroke-width="2.6" paint-order="stroke"/><rect x="495.00" y="319.60" width="17" height="16.8" rx="2.2" fill="#46505c" stroke="#10151c" stroke-width="2.6" paint-order="stroke"/><rect x="495.00" y="338.20" width="17" height="16.8" rx="2.2" fill="#46505c" stroke="#10151c" stroke-width="2.6" paint-order="stroke"/><rect x="495.00" y="356.80" width="17" height="16.8" rx="2.2" fill="#46505c" stroke="#10151c" stroke-width="2.6" paint-order="stroke"/><rect x="495.00" y="375.40" width="17" height="16.8" rx="2.2" fill="#46505c" stroke="#10151c" stroke-width="2.6" paint-order="stroke"/><rect x="495.00" y="394.00" width="17" height="16.8" rx="2.2" fill="#46505c" stroke="#10151c" stroke-width="2.6" paint-order="stroke"/><rect x="516.70" y="282.40" width="17" height="16.8" rx="2.2" fill="#46505c" stroke="#10151c" stroke-width="2.6" paint-order="stroke"/><rect x="516.70" y="301.00" width="17" height="16.8" rx="2.2" fill="#46505c" stroke="#10151c" stroke-width="2.6" paint-order="stroke"/><rect x="516.70" y="319.60" width="17" height="16.8" rx="2.2" fill="#46505c" stroke="#10151c" stroke-width="2.6" paint-order="stroke"/><rect x="516.70" y="338.20" width="17" height="16.8" rx="2.2" fill="#46505c" stroke="#10151c" stroke-width="2.6" paint-order="stroke"/><rect x="516.70" y="356.80" width="17" height="16.8" rx="2.2" fill="#46505c" stroke="#10151c" stroke-width="2.6" paint-order="stroke"/><rect x="516.70" y="375.40" width="17" height="16.8" rx="2.2" fill="#46505c" stroke="#10151c" stroke-width="2.6" paint-order="stroke"/><rect x="516.70" y="394.00" width="17" height="16.8" rx="2.2" fill="#46505c" stroke="#10151c" stroke-width="2.6" paint-order="stroke"/><rect x="538.40" y="282.40" width="17" height="16.8" rx="2.2" fill="#46505c" stroke="#10151c" stroke-width="2.6" paint-order="stroke"/><rect x="538.40" y="301.00" width="17" height="16.8" rx="2.2" fill="#46505c" stroke="#10151c" stroke-width="2.6" paint-order="stroke"/><rect x="538.40" y="319.60" width="17" height="16.8" rx="2.2" fill="#46505c" stroke="#10151c" stroke-width="2.6" paint-order="stroke"/><rect x="538.40" y="338.20" width="17" height="16.8" rx="2.2" fill="#46505c" stroke="#10151c" stroke-width="2.6" paint-order="stroke"/><rect x="538.40" y="356.80" width="17" height="16.8" rx="2.2" fill="#46505c" stroke="#10151c" stroke-width="2.6" paint-order="stroke"/><rect x="538.40" y="375.40" width="17" height="16.8" rx="2.2" fill="#46505c" stroke="#10151c" stroke-width="2.6" paint-order="stroke"/><rect x="538.40" y="394.00" width="17" height="16.8" rx="2.2" fill="#46505c" stroke="#10151c" stroke-width="2.6" paint-order="stroke"/><rect x="560.10" y="282.40" width="17" height="16.8" rx="2.2" fill="#46505c" stroke="#10151c" stroke-width="2.6" paint-order="stroke"/><rect x="560.10" y="301.00" width="17" height="16.8" rx="2.2" fill="#46505c" stroke="#10151c" stroke-width="2.6" paint-order="stroke"/><rect x="560.10" y="319.60" width="17" height="16.8" rx="2.2" fill="#46505c" stroke="#10151c" stroke-width="2.6" paint-order="stroke"/><rect x="560.10" y="338.20" width="17" height="16.8" rx="2.2" fill="#46505c" stroke="#10151c" stroke-width="2.6" paint-order="stroke"/><rect x="560.10" y="356.80" width="17" height="16.8" rx="2.2" fill="#46505c" stroke="#10151c" stroke-width="2.6" paint-order="stroke"/><rect x="560.10" y="375.40" width="17" height="16.8" rx="2.2" fill="#46505c" stroke="#10151c" stroke-width="2.6" paint-order="stroke"/><rect x="560.10" y="394.00" width="17" height="16.8" rx="2.2" fill="#46505c" stroke="#10151c" stroke-width="2.6" paint-order="stroke"/><rect x="581.80" y="282.40" width="17" height="16.8" rx="2.2" fill="#46505c" stroke="#10151c" stroke-width="2.6" paint-order="stroke"/><rect x="581.80" y="301.00" width="17" height="16.8" rx="2.2" fill="#46505c" stroke="#10151c" stroke-width="2.6" paint-order="stroke"/><rect x="581.80" y="319.60" width="17" height="16.8" rx="2.2" fill="#46505c" stroke="#10151c" stroke-width="2.6" paint-order="stroke"/><rect x="581.80" y="338.20" width="17" height="16.8" rx="2.2" fill="#46505c" stroke="#10151c" stroke-width="2.6" paint-order="stroke"/><rect x="581.80" y="356.80" width="17" height="16.8" rx="2.2" fill="#46505c" stroke="#10151c" stroke-width="2.6" paint-order="stroke"/><rect x="581.80" y="375.40" width="17" height="16.8" rx="2.2" fill="#46505c" stroke="#10151c" stroke-width="2.6" paint-order="stroke"/><rect x="581.80" y="394.00" width="17" height="16.8" rx="2.2" fill="#46505c" stroke="#10151c" stroke-width="2.6" paint-order="stroke"/><rect x="603.50" y="282.40" width="17" height="16.8" rx="2.2" fill="#46505c" stroke="#10151c" stroke-width="2.6" paint-order="stroke"/><rect x="603.50" y="301.00" width="17" height="16.8" rx="2.2" fill="#46505c" stroke="#10151c" stroke-width="2.6" paint-order="stroke"/><rect x="603.50" y="319.60" width="17" height="16.8" rx="2.2" fill="#46505c" stroke="#10151c" stroke-width="2.6" paint-order="stroke"/><rect x="603.50" y="338.20" width="17" height="16.8" rx="2.2" fill="#46505c" stroke="#10151c" stroke-width="2.6" paint-order="stroke"/><rect x="603.50" y="356.80" width="17" height="16.8" rx="2.2" fill="#46505c" stroke="#10151c" stroke-width="2.6" paint-order="stroke"/><rect x="603.50" y="375.40" width="17" height="16.8" rx="2.2" fill="#46505c" stroke="#10151c" stroke-width="2.6" paint-order="stroke"/><rect x="603.50" y="394.00" width="17" height="16.8" rx="2.2" fill="#46505c" stroke="#10151c" stroke-width="2.6" paint-order="stroke"/><rect x="625.20" y="282.40" width="17" height="16.8" rx="2.2" fill="#46505c" stroke="#10151c" stroke-width="2.6" paint-order="stroke"/><rect x="625.20" y="301.00" width="17" height="16.8" rx="2.2" fill="#46505c" stroke="#10151c" stroke-width="2.6" paint-order="stroke"/><rect x="625.20" y="319.60" width="17" height="16.8" rx="2.2" fill="#46505c" stroke="#10151c" stroke-width="2.6" paint-order="stroke"/><rect x="625.20" y="338.20" width="17" height="16.8" rx="2.2" fill="#46505c" stroke="#10151c" stroke-width="2.6" paint-order="stroke"/><rect x="625.20" y="356.80" width="17" height="16.8" rx="2.2" fill="#46505c" stroke="#10151c" stroke-width="2.6" paint-order="stroke"/><rect x="625.20" y="375.40" width="17" height="16.8" rx="2.2" fill="#46505c" stroke="#10151c" stroke-width="2.6" paint-order="stroke"/><rect x="625.20" y="394.00" width="17" height="16.8" rx="2.2" fill="#46505c" stroke="#10151c" stroke-width="2.6" paint-order="stroke"/><rect x="646.90" y="282.40" width="17" height="16.8" rx="2.2" fill="#46505c" stroke="#10151c" stroke-width="2.6" paint-order="stroke"/><rect x="646.90" y="301.00" width="17" height="16.8" rx="2.2" fill="#46505c" stroke="#10151c" stroke-width="2.6" paint-order="stroke"/><rect x="646.90" y="319.60" width="17" height="16.8" rx="2.2" fill="#46505c" stroke="#10151c" stroke-width="2.6" paint-order="stroke"/><rect x="646.90" y="338.20" width="17" height="16.8" rx="2.2" fill="#46505c" stroke="#10151c" stroke-width="2.6" paint-order="stroke"/><rect x="646.90" y="356.80" width="17" height="16.8" rx="2.2" fill="#46505c" stroke="#10151c" stroke-width="2.6" paint-order="stroke"/><rect x="646.90" y="375.40" width="17" height="16.8" rx="2.2" fill="#46505c" stroke="#10151c" stroke-width="2.6" paint-order="stroke"/><rect x="646.90" y="394.00" width="17" height="16.8" rx="2.2" fill="#46505c" stroke="#10151c" stroke-width="2.6" paint-order="stroke"/><rect x="668.60" y="282.40" width="17" height="16.8" rx="2.2" fill="#46505c" stroke="#10151c" stroke-width="2.6" paint-order="stroke"/><rect x="668.60" y="301.00" width="17" height="16.8" rx="2.2" fill="#46505c" stroke="#10151c" stroke-width="2.6" paint-order="stroke"/><rect x="668.60" y="319.60" width="17" height="16.8" rx="2.2" fill="#46505c" stroke="#10151c" stroke-width="2.6" paint-order="stroke"/><rect x="668.60" y="338.20" width="17" height="16.8" rx="2.2" fill="#46505c" stroke="#10151c" stroke-width="2.6" paint-order="stroke"/><rect x="668.60" y="356.80" width="17" height="16.8" rx="2.2" fill="#46505c" stroke="#10151c" stroke-width="2.6" paint-order="stroke"/><rect x="668.60" y="375.40" width="17" height="16.8" rx="2.2" fill="#46505c" stroke="#10151c" stroke-width="2.6" paint-order="stroke"/><rect x="668.60" y="394.00" width="17" height="16.8" rx="2.2" fill="#46505c" stroke="#10151c" stroke-width="2.6" paint-order="stroke"/><rect x="690.30" y="282.40" width="17" height="16.8" rx="2.2" fill="#46505c" stroke="#10151c" stroke-width="2.6" paint-order="stroke"/><rect x="690.30" y="301.00" width="17" height="16.8" rx="2.2" fill="#46505c" stroke="#10151c" stroke-width="2.6" paint-order="stroke"/><rect x="690.30" y="319.60" width="17" height="16.8" rx="2.2" fill="#46505c" stroke="#10151c" stroke-width="2.6" paint-order="stroke"/><rect x="690.30" y="338.20" width="17" height="16.8" rx="2.2" fill="#46505c" stroke="#10151c" stroke-width="2.6" paint-order="stroke"/><rect x="690.30" y="356.80" width="17" height="16.8" rx="2.2" fill="#46505c" stroke="#10151c" stroke-width="2.6" paint-order="stroke"/><rect x="690.30" y="375.40" width="17" height="16.8" rx="2.2" fill="#46505c" stroke="#10151c" stroke-width="2.6" paint-order="stroke"/><rect x="690.30" y="394.00" width="17" height="16.8" rx="2.2" fill="#46505c" stroke="#10151c" stroke-width="2.6" paint-order="stroke"/><rect x="712.00" y="282.40" width="17" height="16.8" rx="2.2" fill="#46505c" stroke="#10151c" stroke-width="2.6" paint-order="stroke"/><rect x="712.00" y="301.00" width="17" height="16.8" rx="2.2" fill="#46505c" stroke="#10151c" stroke-width="2.6" paint-order="stroke"/><rect x="712.00" y="319.60" width="17" height="16.8" rx="2.2" fill="#46505c" stroke="#10151c" stroke-width="2.6" paint-order="stroke"/><rect x="712.00" y="338.20" width="17" height="16.8" rx="2.2" fill="#46505c" stroke="#10151c" stroke-width="2.6" paint-order="stroke"/><rect x="712.00" y="356.80" width="17" height="16.8" rx="2.2" fill="#46505c" stroke="#10151c" stroke-width="2.6" paint-order="stroke"/><rect x="712.00" y="375.40" width="17" height="16.8" rx="2.2" fill="#46505c" stroke="#10151c" stroke-width="2.6" paint-order="stroke"/><rect x="712.00" y="394.00" width="17" height="16.8" rx="2.2" fill="#46505c" stroke="#10151c" stroke-width="2.6" paint-order="stroke"/><rect x="733.70" y="282.40" width="17" height="16.8" rx="2.2" fill="#46505c" stroke="#10151c" stroke-width="2.6" paint-order="stroke"/><rect x="733.70" y="301.00" width="17" height="16.8" rx="2.2" fill="#46505c" stroke="#10151c" stroke-width="2.6" paint-order="stroke"/><rect x="733.70" y="319.60" width="17" height="16.8" rx="2.2" fill="#46505c" stroke="#10151c" stroke-width="2.6" paint-order="stroke"/><rect x="733.70" y="338.20" width="17" height="16.8" rx="2.2" fill="#46505c" stroke="#10151c" stroke-width="2.6" paint-order="stroke"/><rect x="733.70" y="356.80" width="17" height="16.8" rx="2.2" fill="#46505c" stroke="#10151c" stroke-width="2.6" paint-order="stroke"/><rect x="733.70" y="375.40" width="17" height="16.8" rx="2.2" fill="#46505c" stroke="#10151c" stroke-width="2.6" paint-order="stroke"/><rect x="733.70" y="394.00" width="17" height="16.8" rx="2.2" fill="#46505c" stroke="#10151c" stroke-width="2.6" paint-order="stroke"/><rect x="755.40" y="282.40" width="17" height="16.8" rx="2.2" fill="#46505c" stroke="#10151c" stroke-width="2.6" paint-order="stroke"/><rect x="755.40" y="301.00" width="17" height="16.8" rx="2.2" fill="#46505c" stroke="#10151c" stroke-width="2.6" paint-order="stroke"/><rect x="755.40" y="319.60" width="17" height="16.8" rx="2.2" fill="#46505c" stroke="#10151c" stroke-width="2.6" paint-order="stroke"/><rect x="755.40" y="338.20" width="17" height="16.8" rx="2.2" fill="#46505c" stroke="#10151c" stroke-width="2.6" paint-order="stroke"/><rect x="755.40" y="356.80" width="17" height="16.8" rx="2.2" fill="#46505c" stroke="#10151c" stroke-width="2.6" paint-order="stroke"/><rect x="755.40" y="375.40" width="17" height="16.8" rx="2.2" fill="#46505c" stroke="#10151c" stroke-width="2.6" paint-order="stroke"/><rect x="755.40" y="394.00" width="17" height="16.8" rx="2.2" fill="#46505c" stroke="#10151c" stroke-width="2.6" paint-order="stroke"/><rect x="777.10" y="282.40" width="17" height="16.8" rx="2.2" fill="#46505c" stroke="#10151c" stroke-width="2.6" paint-order="stroke"/><rect x="777.10" y="301.00" width="17" height="16.8" rx="2.2" fill="#46505c" stroke="#10151c" stroke-width="2.6" paint-order="stroke"/><rect x="777.10" y="319.60" width="17" height="16.8" rx="2.2" fill="#46505c" stroke="#10151c" stroke-width="2.6" paint-order="stroke"/><rect x="777.10" y="338.20" width="17" height="16.8" rx="2.2" fill="#46505c" stroke="#10151c" stroke-width="2.6" paint-order="stroke"/><rect x="777.10" y="356.80" width="17" height="16.8" rx="2.2" fill="#46505c" stroke="#10151c" stroke-width="2.6" paint-order="stroke"/><rect x="777.10" y="375.40" width="17" height="16.8" rx="2.2" fill="#46505c" stroke="#10151c" stroke-width="2.6" paint-order="stroke"/><rect x="777.10" y="394.00" width="17" height="16.8" rx="2.2" fill="#46505c" stroke="#10151c" stroke-width="2.6" paint-order="stroke"/><rect x="798.80" y="282.40" width="17" height="16.8" rx="2.2" fill="#46505c" stroke="#10151c" stroke-width="2.6" paint-order="stroke"/><rect x="798.80" y="301.00" width="17" height="16.8" rx="2.2" fill="#46505c" stroke="#10151c" stroke-width="2.6" paint-order="stroke"/><rect x="798.80" y="319.60" width="17" height="16.8" rx="2.2" fill="#46505c" stroke="#10151c" stroke-width="2.6" paint-order="stroke"/><rect x="798.80" y="338.20" width="17" height="16.8" rx="2.2" fill="#46505c" stroke="#10151c" stroke-width="2.6" paint-order="stroke"/><rect x="798.80" y="356.80" width="17" height="16.8" rx="2.2" fill="#46505c" stroke="#10151c" stroke-width="2.6" paint-order="stroke"/><rect x="798.80" y="375.40" width="17" height="16.8" rx="2.2" fill="#46505c" stroke="#10151c" stroke-width="2.6" paint-order="stroke"/><rect x="798.80" y="394.00" width="17" height="16.8" rx="2.2" fill="#46505c" stroke="#10151c" stroke-width="2.6" paint-order="stroke"/><rect x="820.50" y="282.40" width="17" height="16.8" rx="2.2" fill="#46505c" stroke="#10151c" stroke-width="2.6" paint-order="stroke"/><rect x="820.50" y="301.00" width="17" height="16.8" rx="2.2" fill="#46505c" stroke="#10151c" stroke-width="2.6" paint-order="stroke"/><rect x="820.50" y="319.60" width="17" height="16.8" rx="2.2" fill="#46505c" stroke="#10151c" stroke-width="2.6" paint-order="stroke"/><rect x="820.50" y="338.20" width="17" height="16.8" rx="2.2" fill="#46505c" stroke="#10151c" stroke-width="2.6" paint-order="stroke"/><rect x="820.50" y="356.80" width="17" height="16.8" rx="2.2" fill="#46505c" stroke="#10151c" stroke-width="2.6" paint-order="stroke"/><rect x="820.50" y="375.40" width="17" height="16.8" rx="2.2" fill="#46505c" stroke="#10151c" stroke-width="2.6" paint-order="stroke"/><rect x="820.50" y="394.00" width="17" height="16.8" rx="2.2" fill="#46505c" stroke="#10151c" stroke-width="2.6" paint-order="stroke"/><rect x="842.20" y="282.40" width="17" height="16.8" rx="2.2" fill="#46505c" stroke="#10151c" stroke-width="2.6" paint-order="stroke"/><rect x="842.20" y="301.00" width="17" height="16.8" rx="2.2" fill="#46505c" stroke="#10151c" stroke-width="2.6" paint-order="stroke"/><rect x="842.20" y="319.60" width="17" height="16.8" rx="2.2" fill="#46505c" stroke="#10151c" stroke-width="2.6" paint-order="stroke"/><rect x="842.20" y="338.20" width="17" height="16.8" rx="2.2" fill="#46505c" stroke="#10151c" stroke-width="2.6" paint-order="stroke"/><rect x="842.20" y="356.80" width="17" height="16.8" rx="2.2" fill="#46505c" stroke="#10151c" stroke-width="2.6" paint-order="stroke"/><rect x="842.20" y="375.40" width="17" height="16.8" rx="2.2" fill="#46505c" stroke="#10151c" stroke-width="2.6" paint-order="stroke"/><rect x="842.20" y="394.00" width="17" height="16.8" rx="2.2" fill="#46505c" stroke="#10151c" stroke-width="2.6" paint-order="stroke"/><rect x="863.90" y="282.40" width="17" height="16.8" rx="2.2" fill="#46505c" stroke="#10151c" stroke-width="2.6" paint-order="stroke"/><rect x="863.90" y="301.00" width="17" height="16.8" rx="2.2" fill="#46505c" stroke="#10151c" stroke-width="2.6" paint-order="stroke"/><rect x="863.90" y="319.60" width="17" height="16.8" rx="2.2" fill="#46505c" stroke="#10151c" stroke-width="2.6" paint-order="stroke"/><rect x="863.90" y="338.20" width="17" height="16.8" rx="2.2" fill="#46505c" stroke="#10151c" stroke-width="2.6" paint-order="stroke"/><rect x="863.90" y="356.80" width="17" height="16.8" rx="2.2" fill="#46505c" stroke="#10151c" stroke-width="2.6" paint-order="stroke"/><rect x="863.90" y="375.40" width="17" height="16.8" rx="2.2" fill="#46505c" stroke="#10151c" stroke-width="2.6" paint-order="stroke"/><rect x="863.90" y="394.00" width="17" height="16.8" rx="2.2" fill="#46505c" stroke="#10151c" stroke-width="2.6" paint-order="stroke"/><rect x="885.60" y="282.40" width="17" height="16.8" rx="2.2" fill="#46505c" stroke="#10151c" stroke-width="2.6" paint-order="stroke"/><rect x="885.60" y="301.00" width="17" height="16.8" rx="2.2" fill="#46505c" stroke="#10151c" stroke-width="2.6" paint-order="stroke"/><rect x="885.60" y="319.60" width="17" height="16.8" rx="2.2" fill="#46505c" stroke="#10151c" stroke-width="2.6" paint-order="stroke"/><rect x="885.60" y="338.20" width="17" height="16.8" rx="2.2" fill="#46505c" stroke="#10151c" stroke-width="2.6" paint-order="stroke"/><rect x="885.60" y="356.80" width="17" height="16.8" rx="2.2" fill="#46505c" stroke="#10151c" stroke-width="2.6" paint-order="stroke"/><rect x="885.60" y="375.40" width="17" height="16.8" rx="2.2" fill="#46505c" stroke="#10151c" stroke-width="2.6" paint-order="stroke"/><rect x="885.60" y="394.00" width="17" height="16.8" rx="2.2" fill="#46505c" stroke="#10151c" stroke-width="2.6" paint-order="stroke"/><rect x="907.30" y="282.40" width="17" height="16.8" rx="2.2" fill="#46505c" stroke="#10151c" stroke-width="2.6" paint-order="stroke"/><rect x="907.30" y="301.00" width="17" height="16.8" rx="2.2" fill="#46505c" stroke="#10151c" stroke-width="2.6" paint-order="stroke"/><rect x="907.30" y="319.60" width="17" height="16.8" rx="2.2" fill="#46505c" stroke="#10151c" stroke-width="2.6" paint-order="stroke"/><rect x="907.30" y="338.20" width="17" height="16.8" rx="2.2" fill="#46505c" stroke="#10151c" stroke-width="2.6" paint-order="stroke"/><rect x="907.30" y="356.80" width="17" height="16.8" rx="2.2" fill="#46505c" stroke="#10151c" stroke-width="2.6" paint-order="stroke"/><rect x="907.30" y="375.40" width="17" height="16.8" rx="2.2" fill="#46505c" stroke="#10151c" stroke-width="2.6" paint-order="stroke"/><rect x="907.30" y="394.00" width="17" height="16.8" rx="2.2" fill="#46505c" stroke="#10151c" stroke-width="2.6" paint-order="stroke"/><rect x="929.00" y="282.40" width="17" height="16.8" rx="2.2" fill="#46505c" stroke="#10151c" stroke-width="2.6" paint-order="stroke"/><rect x="929.00" y="301.00" width="17" height="16.8" rx="2.2" fill="#46505c" stroke="#10151c" stroke-width="2.6" paint-order="stroke"/><rect x="929.00" y="319.60" width="17" height="16.8" rx="2.2" fill="#46505c" stroke="#10151c" stroke-width="2.6" paint-order="stroke"/><rect x="929.00" y="338.20" width="17" height="16.8" rx="2.2" fill="#46505c" stroke="#10151c" stroke-width="2.6" paint-order="stroke"/><rect x="929.00" y="356.80" width="17" height="16.8" rx="2.2" fill="#46505c" stroke="#10151c" stroke-width="2.6" paint-order="stroke"/><rect x="929.00" y="375.40" width="17" height="16.8" rx="2.2" fill="#46505c" stroke="#10151c" stroke-width="2.6" paint-order="stroke"/><rect x="929.00" y="394.00" width="17" height="16.8" rx="2.2" fill="#46505c" stroke="#10151c" stroke-width="2.6" paint-order="stroke"/><rect x="950.70" y="282.40" width="17" height="16.8" rx="2.2" fill="#46505c" stroke="#10151c" stroke-width="2.6" paint-order="stroke"/><rect x="950.70" y="301.00" width="17" height="16.8" rx="2.2" fill="#46505c" stroke="#10151c" stroke-width="2.6" paint-order="stroke"/><rect x="950.70" y="319.60" width="17" height="16.8" rx="2.2" fill="#46505c" stroke="#10151c" stroke-width="2.6" paint-order="stroke"/><rect x="950.70" y="338.20" width="17" height="16.8" rx="2.2" fill="#46505c" stroke="#10151c" stroke-width="2.6" paint-order="stroke"/><rect x="950.70" y="356.80" width="17" height="16.8" rx="2.2" fill="#46505c" stroke="#10151c" stroke-width="2.6" paint-order="stroke"/><rect x="950.70" y="375.40" width="17" height="16.8" rx="2.2" fill="#46505c" stroke="#10151c" stroke-width="2.6" paint-order="stroke"/><rect x="950.70" y="394.00" width="17" height="16.8" rx="2.2" fill="#46505c" stroke="#10151c" stroke-width="2.6" paint-order="stroke"/><rect x="972.40" y="282.40" width="17" height="16.8" rx="2.2" fill="#46505c" stroke="#10151c" stroke-width="2.6" paint-order="stroke"/><rect x="972.40" y="301.00" width="17" height="16.8" rx="2.2" fill="#46505c" stroke="#10151c" stroke-width="2.6" paint-order="stroke"/><rect x="972.40" y="319.60" width="17" height="16.8" rx="2.2" fill="#46505c" stroke="#10151c" stroke-width="2.6" paint-order="stroke"/><rect x="972.40" y="338.20" width="17" height="16.8" rx="2.2" fill="#46505c" stroke="#10151c" stroke-width="2.6" paint-order="stroke"/><rect x="972.40" y="356.80" width="17" height="16.8" rx="2.2" fill="#46505c" stroke="#10151c" stroke-width="2.6" paint-order="stroke"/><rect x="972.40" y="375.40" width="17" height="16.8" rx="2.2" fill="#46505c" stroke="#10151c" stroke-width="2.6" paint-order="stroke"/><rect x="972.40" y="394.00" width="17" height="16.8" rx="2.2" fill="#46505c" stroke="#10151c" stroke-width="2.6" paint-order="stroke"/><rect x="994.10" y="282.40" width="17" height="16.8" rx="2.2" fill="#46505c" stroke="#10151c" stroke-width="2.6" paint-order="stroke"/><rect x="994.10" y="301.00" width="17" height="16.8" rx="2.2" fill="#46505c" stroke="#10151c" stroke-width="2.6" paint-order="stroke"/><rect x="994.10" y="319.60" width="17" height="16.8" rx="2.2" fill="#46505c" stroke="#10151c" stroke-width="2.6" paint-order="stroke"/><rect x="994.10" y="338.20" width="17" height="16.8" rx="2.2" fill="#46505c" stroke="#10151c" stroke-width="2.6" paint-order="stroke"/><rect x="994.10" y="356.80" width="17" height="16.8" rx="2.2" fill="#46505c" stroke="#10151c" stroke-width="2.6" paint-order="stroke"/><rect x="994.10" y="375.40" width="17" height="16.8" rx="2.2" fill="#46505c" stroke="#10151c" stroke-width="2.6" paint-order="stroke"/><rect x="994.10" y="394.00" width="17" height="16.8" rx="2.2" fill="#46505c" stroke="#10151c" stroke-width="2.6" paint-order="stroke"/><rect x="1015.80" y="282.40" width="17" height="16.8" rx="2.2" fill="#46505c" stroke="#10151c" stroke-width="2.6" paint-order="stroke"/><rect x="1015.80" y="301.00" width="17" height="16.8" rx="2.2" fill="#46505c" stroke="#10151c" stroke-width="2.6" paint-order="stroke"/><rect x="1015.80" y="319.60" width="17" height="16.8" rx="2.2" fill="#46505c" stroke="#10151c" stroke-width="2.6" paint-order="stroke"/><rect x="1015.80" y="338.20" width="17" height="16.8" rx="2.2" fill="#46505c" stroke="#10151c" stroke-width="2.6" paint-order="stroke"/><rect x="1015.80" y="356.80" width="17" height="16.8" rx="2.2" fill="#46505c" stroke="#10151c" stroke-width="2.6" paint-order="stroke"/><rect x="1015.80" y="375.40" width="17" height="16.8" rx="2.2" fill="#46505c" stroke="#10151c" stroke-width="2.6" paint-order="stroke"/><rect x="1015.80" y="394.00" width="17" height="16.8" rx="2.2" fill="#46505c" stroke="#10151c" stroke-width="2.6" paint-order="stroke"/><rect x="1037.50" y="282.40" width="17" height="16.8" rx="2.2" fill="#46505c" stroke="#10151c" stroke-width="2.6" paint-order="stroke"/><rect x="1037.50" y="301.00" width="17" height="16.8" rx="2.2" fill="#46505c" stroke="#10151c" stroke-width="2.6" paint-order="stroke"/><rect x="1037.50" y="319.60" width="17" height="16.8" rx="2.2" fill="#46505c" stroke="#10151c" stroke-width="2.6" paint-order="stroke"/><rect x="1037.50" y="338.20" width="17" height="16.8" rx="2.2" fill="#46505c" stroke="#10151c" stroke-width="2.6" paint-order="stroke"/><rect x="1037.50" y="356.80" width="17" height="16.8" rx="2.2" fill="#46505c" stroke="#10151c" stroke-width="2.6" paint-order="stroke"/><rect x="1037.50" y="375.40" width="17" height="16.8" rx="2.2" fill="#46505c" stroke="#10151c" stroke-width="2.6" paint-order="stroke"/><rect x="1037.50" y="394.00" width="17" height="16.8" rx="2.2" fill="#46505c" stroke="#10151c" stroke-width="2.6" paint-order="stroke"/><rect x="1059.20" y="282.40" width="17" height="16.8" rx="2.2" fill="#46505c" stroke="#10151c" stroke-width="2.6" paint-order="stroke"/><rect x="1059.20" y="301.00" width="17" height="16.8" rx="2.2" fill="#46505c" stroke="#10151c" stroke-width="2.6" paint-order="stroke"/><rect x="1059.20" y="319.60" width="17" height="16.8" rx="2.2" fill="#46505c" stroke="#10151c" stroke-width="2.6" paint-order="stroke"/><rect x="1059.20" y="338.20" width="17" height="16.8" rx="2.2" fill="#46505c" stroke="#10151c" stroke-width="2.6" paint-order="stroke"/><rect x="1059.20" y="356.80" width="17" height="16.8" rx="2.2" fill="#46505c" stroke="#10151c" stroke-width="2.6" paint-order="stroke"/><rect x="1059.20" y="375.40" width="17" height="16.8" rx="2.2" fill="#46505c" stroke="#10151c" stroke-width="2.6" paint-order="stroke"/><rect x="1059.20" y="394.00" width="17" height="16.8" rx="2.2" fill="#46505c" stroke="#10151c" stroke-width="2.6" paint-order="stroke"/><rect x="1080.90" y="282.40" width="17" height="16.8" rx="2.2" fill="#46505c" stroke="#10151c" stroke-width="2.6" paint-order="stroke"/><rect x="1080.90" y="301.00" width="17" height="16.8" rx="2.2" fill="#46505c" stroke="#10151c" stroke-width="2.6" paint-order="stroke"/><rect x="1080.90" y="319.60" width="17" height="16.8" rx="2.2" fill="#46505c" stroke="#10151c" stroke-width="2.6" paint-order="stroke"/><rect x="1080.90" y="338.20" width="17" height="16.8" rx="2.2" fill="#46505c" stroke="#10151c" stroke-width="2.6" paint-order="stroke"/><rect x="1080.90" y="356.80" width="17" height="16.8" rx="2.2" fill="#46505c" stroke="#10151c" stroke-width="2.6" paint-order="stroke"/><rect x="1080.90" y="375.40" width="17" height="16.8" rx="2.2" fill="#46505c" stroke="#10151c" stroke-width="2.6" paint-order="stroke"/><rect x="1080.90" y="394.00" width="17" height="16.8" rx="2.2" fill="#46505c" stroke="#10151c" stroke-width="2.6" paint-order="stroke"/><rect x="1102.60" y="282.40" width="17" height="16.8" rx="2.2" fill="#46505c" stroke="#10151c" stroke-width="2.6" paint-order="stroke"/><rect x="1102.60" y="301.00" width="17" height="16.8" rx="2.2" fill="#46505c" stroke="#10151c" stroke-width="2.6" paint-order="stroke"/><rect x="1102.60" y="319.60" width="17" height="16.8" rx="2.2" fill="#46505c" stroke="#10151c" stroke-width="2.6" paint-order="stroke"/><rect x="1102.60" y="338.20" width="17" height="16.8" rx="2.2" fill="#46505c" stroke="#10151c" stroke-width="2.6" paint-order="stroke"/><rect x="1102.60" y="356.80" width="17" height="16.8" rx="2.2" fill="#46505c" stroke="#10151c" stroke-width="2.6" paint-order="stroke"/><rect x="1102.60" y="375.40" width="17" height="16.8" rx="2.2" fill="#46505c" stroke="#10151c" stroke-width="2.6" paint-order="stroke"/><rect x="1102.60" y="394.00" width="17" height="16.8" rx="2.2" fill="#46505c" stroke="#10151c" stroke-width="2.6" paint-order="stroke"/><rect x="1124.30" y="282.40" width="17" height="16.8" rx="2.2" fill="#46505c" stroke="#10151c" stroke-width="2.6" paint-order="stroke"/><rect x="1124.30" y="301.00" width="17" height="16.8" rx="2.2" fill="#46505c" stroke="#10151c" stroke-width="2.6" paint-order="stroke"/><rect x="1124.30" y="319.60" width="17" height="16.8" rx="2.2" fill="#46505c" stroke="#10151c" stroke-width="2.6" paint-order="stroke"/><rect x="1124.30" y="338.20" width="17" height="16.8" rx="2.2" fill="#46505c" stroke="#10151c" stroke-width="2.6" paint-order="stroke"/><rect x="1124.30" y="356.80" width="17" height="16.8" rx="2.2" fill="#46505c" stroke="#10151c" stroke-width="2.6" paint-order="stroke"/><rect x="1124.30" y="375.40" width="17" height="16.8" rx="2.2" fill="#46505c" stroke="#10151c" stroke-width="2.6" paint-order="stroke"/><rect x="1124.30" y="394.00" width="17" height="16.8" rx="2.2" fill="#46505c" stroke="#10151c" stroke-width="2.6" paint-order="stroke"/><rect x="1146.00" y="282.40" width="17" height="16.8" rx="2.2" fill="#46505c" stroke="#10151c" stroke-width="2.6" paint-order="stroke"/><rect x="1146.00" y="301.00" width="17" height="16.8" rx="2.2" fill="#46505c" stroke="#10151c" stroke-width="2.6" paint-order="stroke"/><rect x="1146.00" y="319.60" width="17" height="16.8" rx="2.2" fill="#46505c" stroke="#10151c" stroke-width="2.6" paint-order="stroke"/><rect x="1146.00" y="338.20" width="17" height="16.8" rx="2.2" fill="#46505c" stroke="#10151c" stroke-width="2.6" paint-order="stroke"/><rect x="1146.00" y="356.80" width="17" height="16.8" rx="2.2" fill="#46505c" stroke="#10151c" stroke-width="2.6" paint-order="stroke"/><rect x="1146.00" y="375.40" width="17" height="16.8" rx="2.2" fill="#46505c" stroke="#10151c" stroke-width="2.6" paint-order="stroke"/><rect x="1146.00" y="394.00" width="17" height="16.8" rx="2.2" fill="#46505c" stroke="#10151c" stroke-width="2.6" paint-order="stroke"/><rect x="1167.70" y="282.40" width="17" height="16.8" rx="2.2" fill="#46505c" stroke="#10151c" stroke-width="2.6" paint-order="stroke"/><rect x="1167.70" y="301.00" width="17" height="16.8" rx="2.2" fill="#7fd9c1" stroke="#10151c" stroke-width="2.6" paint-order="stroke"/></svg>
<div class="a" style="left:33.5px;top:279.5px;width:1170px;height:135.5px;background:transparent;border:1px solid #171d26;border-radius:2px;"></div>
<div class="a" style="left:51.8px;top:440.8px;font-size:14px;line-height:1;color:#8e97a1;font-weight:normal;letter-spacing:0.05px;font-family:'Liberation Sans',sans-serif;">Chain</div>
<div class="a" style="left:111.5px;top:440.8px;font-size:14px;line-height:1;color:#8e97a1;font-weight:normal;letter-spacing:0.25px;font-family:'Liberation Sans',sans-serif;">Action</div>
<div class="a" style="left:229.2px;top:440.8px;font-size:14px;line-height:1;color:#8e97a1;font-weight:normal;letter-spacing:0.25px;font-family:'Liberation Sans',sans-serif;">From</div>
<div class="a" style="left:564.5px;top:440.8px;font-size:14px;line-height:1;color:#8e97a1;font-weight:normal;letter-spacing:0.0px;font-family:'Liberation Sans',sans-serif;">To</div>
<div class="a" style="left:679.5px;top:440.8px;font-size:14px;line-height:1;color:#8e97a1;font-weight:normal;letter-spacing:0.1px;font-family:'Liberation Sans',sans-serif;">Amount</div>
<div class="a" style="left:748px;top:440.8px;font-size:14px;line-height:1;color:#8e97a1;font-weight:normal;letter-spacing:0.25px;font-family:'Liberation Sans',sans-serif;">Token</div>
<div class="a" style="left:972.5px;top:440.8px;font-size:14px;line-height:1;color:#8e97a1;font-weight:normal;letter-spacing:-0.15px;font-family:'Liberation Sans',sans-serif;">Value</div>
<div class="a" style="left:1061.3px;top:440.8px;font-size:14px;line-height:1;color:#8e97a1;font-weight:normal;letter-spacing:-0.15px;font-family:'Liberation Sans',sans-serif;">Time</div>
<div class="a" style="left:1126.5px;top:440.8px;font-size:14px;line-height:1;color:#8e97a1;font-weight:normal;letter-spacing:0.37px;font-family:'Liberation Sans',sans-serif;">Details</div>
<svg class="a" style="left:1039px;top:440px" width="14" height="14" viewBox="0 0 14 14"><circle cx="7" cy="7" r="5.8" fill="none" stroke="#8e97a1" stroke-width="1.4"/><path d="M7 3.8 V7.2 L9.2 8.6" fill="none" stroke="#8e97a1" stroke-width="1.4" stroke-linecap="round"/></svg>
<svg class="a" style="left:1095px;top:437px" width="11" height="16" viewBox="0 0 11 16"><path d="M1.5 6 L5.5 1.5 L9.5 6 Z M1.5 9.5 L5.5 14 L9.5 9.5 Z" fill="#4a525c"/></svg>
<div class="a" style="left:22px;top:469px;width:1200px;height:1px;background:#2a3039;border-radius:0px;"></div>
<div class="a" style="left:22px;top:567px;width:1200px;height:1px;background:#2a3039;border-radius:0px;"></div>
<svg class="a" style="left:60px;top:508px" width="21" height="21" viewBox="0 0 21 21"><circle cx="10.3" cy="10.5" r="9.6" fill="#6c7fe0"/><path d="M10.3 4 L6.6 10.4 L10.3 12.6 L14 10.4 Z" fill="#dfe4fb"/><path d="M6.6 11.4 L10.3 16.6 L14 11.4 L10.3 13.6 Z" fill="#c9d1f7"/></svg>
<div class="a" style="left:110px;top:507.5px;width:92px;height:23px;background:#3d4856;border-radius:4px;"></div>
<div class="a" style="left:119.4px;top:511.4px;font-size:14px;line-height:1;color:#eceef1;font-weight:normal;letter-spacing:-0.06px;font-family:'Liberation Sans',sans-serif;">0x8a4f75d6</div>
<svg class="a" style="left:231px;top:482.2px" width="16" height="16" viewBox="0 0 16 16"><circle cx="8" cy="1.8" r="1.3" fill="#d3e8f7"/><path d="M7.3 2.5 H8.7 V4.5 H7.3 Z" fill="#d3e8f7"/><rect x="1.5" y="4.2" width="13" height="10" rx="3.4" fill="#d3e8f7"/><rect x="0" y="7.2" width="2" height="4" rx="1" fill="#d3e8f7"/><rect x="14" y="7.2" width="2" height="4" rx="1" fill="#d3e8f7"/><rect x="5.2" y="7" width="1.6" height="3.6" rx="0.8" fill="#161c25"/><rect x="9.2" y="7" width="1.6" height="3.6" rx="0.8" fill="#161c25"/></svg>
<svg class="a" style="left:256px;top:482.2px" width="16" height="16" viewBox="0 0 16 16"><path d="M8 0.8 L15 4.6 V5.8 H1 V4.6 Z" fill="#9a6fcc"/><path d="M2.6 7 H4.4 V12.2 H2.6 Z M6.1 7 H7.9 V12.2 H6.1 Z M9.6 7 H11.4 V12.2 H9.6 Z M11.6 7 H13.4 V12.2 H11.6 Z" fill="#9a6fcc"/><path d="M1 13.2 H15 V15 H1 Z" fill="#9a6fcc"/></svg>
<div class="a" style="left:279px;top:482.8px;font-size:13.7px;line-height:1;color:#9aa1a9;font-weight:normal;letter-spacing:0.1px;font-family:'Liberation Mono',monospace;">Balancer: V2 Vault [0xba1222]</div>
<div class="a" style="left:562.5px;top:483.09999999999997px;font-size:13.7px;line-height:1;color:#c3c8ce;font-weight:normal;letter-spacing:0.2px;font-family:'Liberation Mono',monospace;">[0xaa760d]</div>
<svg class="a" style="left:231px;top:512.0px" width="16" height="16" viewBox="0 0 16 16"><circle cx="8" cy="1.8" r="1.3" fill="#d3e8f7"/><path d="M7.3 2.5 H8.7 V4.5 H7.3 Z" fill="#d3e8f7"/><rect x="1.5" y="4.2" width="13" height="10" rx="3.4" fill="#d3e8f7"/><rect x="0" y="7.2" width="2" height="4" rx="1" fill="#d3e8f7"/><rect x="14" y="7.2" width="2" height="4" rx="1" fill="#d3e8f7"/><rect x="5.2" y="7" width="1.6" height="3.6" rx="0.8" fill="#161c25"/><rect x="9.2" y="7" width="1.6" height="3.6" rx="0.8" fill="#161c25"/></svg>
<svg class="a" style="left:256px;top:512.0px" width="16" height="16" viewBox="0 0 16 16"><path d="M8 0.8 L15 4.6 V5.8 H1 V4.6 Z" fill="#9a6fcc"/><path d="M2.6 7 H4.4 V12.2 H2.6 Z M6.1 7 H7.9 V12.2 H6.1 Z M9.6 7 H11.4 V12.2 H9.6 Z M11.6 7 H13.4 V12.2 H11.6 Z" fill="#9a6fcc"/><path d="M1 13.2 H15 V15 H1 Z" fill="#9a6fcc"/></svg>
<div class="a" style="left:279px;top:512.6px;font-size:13.7px;line-height:1;color:#9aa1a9;font-weight:normal;letter-spacing:0.1px;font-family:'Liberation Mono',monospace;">Balancer: V2 Vault [0xba1222]</div>
<div class="a" style="left:562.5px;top:512.9px;font-size:13.7px;line-height:1;color:#c3c8ce;font-weight:normal;letter-spacing:0.2px;font-family:'Liberation Mono',monospace;">[0xaa760d]</div>
<svg class="a" style="left:231px;top:541.5px" width="16" height="16" viewBox="0 0 16 16"><circle cx="8" cy="1.8" r="1.3" fill="#d3e8f7"/><path d="M7.3 2.5 H8.7 V4.5 H7.3 Z" fill="#d3e8f7"/><rect x="1.5" y="4.2" width="13" height="10" rx="3.4" fill="#d3e8f7"/><rect x="0" y="7.2" width="2" height="4" rx="1" fill="#d3e8f7"/><rect x="14" y="7.2" width="2" height="4" rx="1" fill="#d3e8f7"/><rect x="5.2" y="7" width="1.6" height="3.6" rx="0.8" fill="#161c25"/><rect x="9.2" y="7" width="1.6" height="3.6" rx="0.8" fill="#161c25"/></svg>
<svg class="a" style="left:256px;top:541.5px" width="16" height="16" viewBox="0 0 16 16"><path d="M8 0.8 L15 4.6 V5.8 H1 V4.6 Z" fill="#9a6fcc"/><path d="M2.6 7 H4.4 V12.2 H2.6 Z M6.1 7 H7.9 V12.2 H6.1 Z M9.6 7 H11.4 V12.2 H9.6 Z M11.6 7 H13.4 V12.2 H11.6 Z" fill="#9a6fcc"/><path d="M1 13.2 H15 V15 H1 Z" fill="#9a6fcc"/></svg>
<div class="a" style="left:279px;top:542.1px;font-size:13.7px;line-height:1;color:#9aa1a9;font-weight:normal;letter-spacing:0.1px;font-family:'Liberation Mono',monospace;">Balancer: V2 Vault [0xba1222]</div>
<div class="a" style="left:562.5px;top:542.4px;font-size:13.7px;line-height:1;color:#c3c8ce;font-weight:normal;letter-spacing:0.2px;font-family:'Liberation Mono',monospace;">[0xaa760d]</div>
<div class="a" style="left:687.5px;top:482.2px;font-size:13.7px;line-height:1;color:#67b981;font-weight:normal;letter-spacing:0px;font-family:'Liberation Mono',monospace;">6.85K</div>
<div class="a" style="left:687.5px;top:512.0px;font-size:13.7px;line-height:1;color:#67b981;font-weight:normal;letter-spacing:0px;font-family:'Liberation Mono',monospace;">6.59K</div>
<div class="a" style="left:687.5px;top:541.5px;font-size:13.7px;line-height:1;color:#67b981;font-weight:normal;letter-spacing:0px;font-family:'Liberation Mono',monospace;">4.26K</div>
<div class="a" style="left:778.5px;top:481.5px;font-size:13.9px;line-height:1;color:#e3e6ea;font-weight:normal;letter-spacing:0px;font-family:'Liberation Mono',monospace;-webkit-text-stroke:0.1px #e3e6ea;">OSETH</div>
<div class="a" style="left:778.5px;top:513.1px;font-size:13.9px;line-height:1;color:#e3e6ea;font-weight:normal;letter-spacing:0px;font-family:'Liberation Mono',monospace;-webkit-text-stroke:0.1px #e3e6ea;">WETH</div>
<div class="a" style="left:778.5px;top:544.1px;font-size:13.9px;line-height:1;color:#e3e6ea;font-weight:normal;letter-spacing:0px;font-family:'Liberation Mono',monospace;-webkit-text-stroke:0.1px #e3e6ea;">WSTETH</div>
<svg class="a" style="left:747px;top:474px" width="24" height="26" viewBox="0 0 24 26"><defs><linearGradient id="g1" x1="0" y1="0" x2="0.3" y2="1"><stop offset="0" stop-color="#5b63dc"/><stop offset="1" stop-color="#86c3f4"/></linearGradient><linearGradient id="g2" x1="0" y1="0" x2="0" y2="1"><stop offset="0" stop-color="#4a5bd6"/><stop offset="1" stop-color="#5d9be8"/></linearGradient></defs><path d="M11.8 1 L21 18.3 L11.8 24 Z" fill="url(#g2)"/><path d="M11.8 1 L2 18.3 L11.8 24 Z" fill="url(#g1)"/></svg>
<svg class="a" style="left:748px;top:508px" width="22" height="22" viewBox="0 0 22 22"><path d="M1.6 9 A9.6 9.6 0 0 1 9.5 1.3" fill="none" stroke="#b42f3f" stroke-width="2.4"/><circle cx="11" cy="11" r="9.4" fill="#0b0b0b"/><circle cx="11" cy="11" r="7.9" fill="#f5f5f5"/><text x="11" y="13" font-size="5.6" font-family="Liberation Sans" font-weight="bold" text-anchor="middle" fill="#000" letter-spacing="-0.35" stroke="#000" stroke-width="0.25">WETH</text></svg>
<svg class="a" style="left:747px;top:538px" width="23" height="23" viewBox="0 0 23 23"><circle cx="11.4" cy="11.6" r="11" fill="#1f3e6e"/><circle cx="11.4" cy="11.6" r="10.2" fill="#4ea2ea"/><path d="M11.4 3.6 L14.6 8.2 A3.6 3.6 0 1 1 8.2 8.2 Z" fill="#e9f4fe"/><path d="M6.4 11.6 C6.6 15.8 9 17.8 11.4 17.8 C13.8 17.8 16.2 15.8 16.4 11.6 L11.4 15 Z" fill="#e9f4fe"/></svg>
<div class="a" style="left:867.7px;top:483.59999999999997px;font-size:13.7px;line-height:1;color:#dfe2e6;font-weight:normal;letter-spacing:0px;font-family:'Liberation Mono',monospace;">$26.98M</div>
<div class="a" style="left:935px;top:487px;width:73px;height:5px;background:#6cc98a;border-radius:3px;"></div>
<div class="a" style="left:935px;top:487px;width:28px;height:5px;background:#3a6447;border-radius:3px;border-top-right-radius:0;border-bottom-right-radius:0"></div>
<div class="a" style="left:867.7px;top:513.4px;font-size:13.7px;line-height:1;color:#dfe2e6;font-weight:normal;letter-spacing:0px;font-family:'Liberation Mono',monospace;">$24.57M</div>
<div class="a" style="left:935px;top:516.2px;width:73px;height:5px;background:#6cc98a;border-radius:3px;"></div>
<div class="a" style="left:935px;top:516.2px;width:20px;height:5px;background:#3a6447;border-radius:3px;border-top-right-radius:0;border-bottom-right-radius:0"></div>
<div class="a" style="left:867.7px;top:542.9px;font-size:13.7px;line-height:1;color:#dfe2e6;font-weight:normal;letter-spacing:0px;font-family:'Liberation Mono',monospace;">$19.34M</div>
<div class="a" style="left:935px;top:545px;width:73px;height:5px;background:#6cc98a;border-radius:3px;"></div>
<div class="a" style="left:1048px;top:512.8px;font-size:13.7px;line-height:1;color:#d3d7dc;font-weight:normal;letter-spacing:0px;font-family:'Liberation Mono',monospace;">16m ago</div>
<svg class="a" style="left:1141px;top:510px" width="16" height="16" viewBox="0 0 16 16"><circle cx="8" cy="8" r="7.3" fill="#a9aeb5"/><path d="M8 7 V12" stroke="#161c25" stroke-width="1.4" stroke-linecap="round"/><circle cx="8" cy="4.6" r="0.9" fill="#161c25"/></svg>
</body></html>
